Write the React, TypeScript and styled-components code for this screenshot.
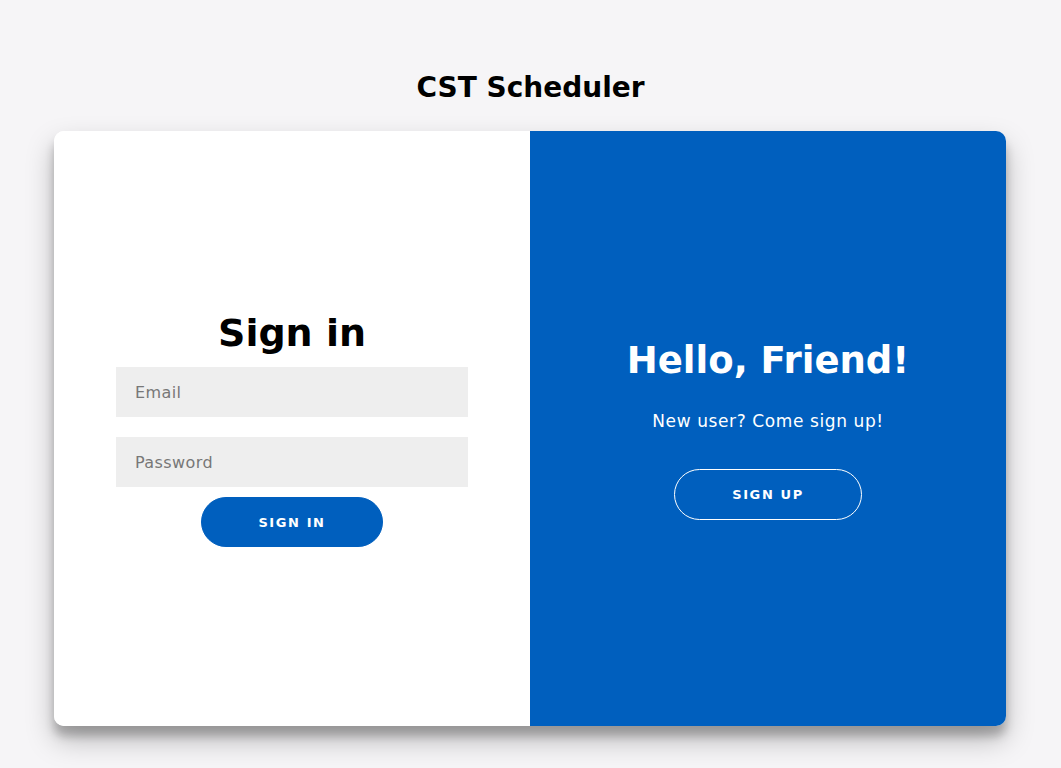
import React from "react";
import styled, { createGlobalStyle } from "styled-components";

const GlobalStyle = createGlobalStyle`
  * {
    box-sizing: border-box;
  }

  body {
    margin: 0;
    background: #f6f5f7;
    font-family: "DejaVu Sans", "Liberation Sans", sans-serif;
  }
`;

const BLUE = "#005fbe";

const Page = styled.div`
  display: flex;
  flex-direction: column;
  align-items: center;
  padding-top: 68px;
  min-height: 768px;
`;

const AppTitle = styled.h2`
  margin: 0 0 23px;
  font-size: 28px;
  font-weight: 700;
  line-height: 40px;
  color: #000;
`;

const Container = styled.div`
  display: grid;
  grid-template-columns: 1fr 1fr;
  width: 952px;
  height: 595px;
  margin-left: -1px;
  background: #fff;
  border-radius: 10px;
  overflow: hidden;
  box-shadow:
    0 14px 28px rgba(0, 0, 0, 0.25),
    0 10px 10px rgba(0, 0, 0, 0.22);
`;

const FormPanel = styled.form`
  display: flex;
  flex-direction: column;
  align-items: center;
  justify-content: center;
  padding: 0 62px;
  background: #fff;
`;

const OverlayPanel = styled.div`
  display: flex;
  flex-direction: column;
  align-items: center;
  justify-content: center;
  padding: 0 40px;
  background: ${BLUE};
  color: #fff;
  text-align: center;
`;

const Heading = styled.h1<{ $light?: boolean }>`
  margin: 0 0 ${(p) => (p.$light ? "8px" : "11px")};
  font-size: ${(p) => (p.$light ? "37px" : "38px")};
  font-weight: 700;
  line-height: 46px;
  color: ${(p) => (p.$light ? "#fff" : "#000")};
`;

const Input = styled.input`
  width: 100%;
  height: 50px;
  margin-bottom: 20px;
  padding: 0 19px;
  border: none;
  outline: none;
  background: #eee;
  font-family: inherit;
  font-size: 16px;
  letter-spacing: 0.4px;
  color: #333;

  &::placeholder {
    color: #777;
  }

  &:last-of-type {
    margin-bottom: 10px;
  }
`;

const Lead = styled.p`
  margin: 18px 0 37px;
  font-size: 17px;
  line-height: 22px;
  letter-spacing: 0.6px;
`;

const Button = styled.button<{ $ghost?: boolean }>`
  height: ${(p) => (p.$ghost ? "51px" : "50px")};
  width: ${(p) => (p.$ghost ? "188px" : "182px")};
  border-radius: 26px;
  border: 1px solid ${(p) => (p.$ghost ? "#fff" : BLUE)};
  background: ${(p) => (p.$ghost ? "transparent" : BLUE)};
  color: #fff;
  font-family: inherit;
  font-size: 13px;
  font-weight: 700;
  letter-spacing: 1.6px;
  text-transform: uppercase;
  cursor: pointer;
`;

export default function App() {
  return (
    <>
      <GlobalStyle />
      <Page>
        <AppTitle>CST Scheduler</AppTitle>
        <Container>
          <FormPanel onSubmit={(e) => e.preventDefault()}>
            <Heading>Sign in</Heading>
            <Input type="email" placeholder="Email" />
            <Input type="password" placeholder="Password" />
            <Button type="submit">Sign In</Button>
          </FormPanel>
          <OverlayPanel>
            <Heading $light>Hello, Friend!</Heading>
            <Lead>New user? Come sign up!</Lead>
            <Button $ghost type="button">
              Sign Up
            </Button>
          </OverlayPanel>
        </Container>
      </Page>
    </>
  );
}
